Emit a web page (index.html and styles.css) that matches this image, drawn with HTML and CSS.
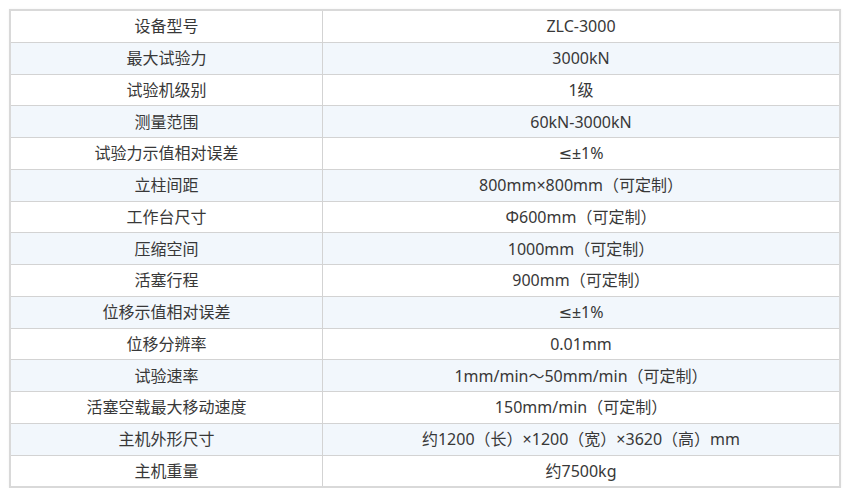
FILE: index.html
```html
<!DOCTYPE html>
<html lang="zh">
<head>
<meta charset="utf-8">
<title>参数表</title>
<link rel="stylesheet" href="styles.css">
</head>
<body>
<div class="wrap">
<table class="spec">
<tbody>
<tr><td class="k">设备型号</td><td class="v">ZLC-3000</td></tr>
<tr><td class="k">最大试验力</td><td class="v">3000kN</td></tr>
<tr><td class="k">试验机级别</td><td class="v">1级</td></tr>
<tr><td class="k">测量范围</td><td class="v">60kN-3000kN</td></tr>
<tr><td class="k">试验力示值相对误差</td><td class="v">≤±1%</td></tr>
<tr><td class="k">立柱间距</td><td class="v">800mm×800mm（可定制）</td></tr>
<tr><td class="k">工作台尺寸</td><td class="v">Φ600mm（可定制）</td></tr>
<tr><td class="k">压缩空间</td><td class="v">1000mm（可定制）</td></tr>
<tr><td class="k">活塞行程</td><td class="v">900mm（可定制）</td></tr>
<tr><td class="k">位移示值相对误差</td><td class="v">≤±1%</td></tr>
<tr><td class="k">位移分辨率</td><td class="v">0.01mm</td></tr>
<tr><td class="k">试验速率</td><td class="v">1mm/min～50mm/min（可定制）</td></tr>
<tr><td class="k">活塞空载最大移动速度</td><td class="v">150mm/min（可定制）</td></tr>
<tr><td class="k">主机外形尺寸</td><td class="v">约1200（长）×1200（宽）×3620（高）mm</td></tr>
<tr><td class="k">主机重量</td><td class="v">约7500kg</td></tr>
</tbody>
</table>
</div>
</body>
</html>
```
FILE: styles.css
```css
html, body {
  margin: 0;
  padding: 0;
  background: #ffffff;
}
.wrap {
  padding: 9px 4px 0 9px;
}
.spec {
  width: 832px;
  border-collapse: collapse;
  border: 2px solid #d9d9d9;
  font-family: "Noto Sans", "DejaVu Sans", "Noto Sans CJK SC", sans-serif;
  font-size: 16px;
  color: #383838;
  box-shadow: 0 0 2px rgba(0,0,0,0.06);
}
.spec td {
  border: 1px solid #d3d3d3;
  height: 30.75px;
  padding: 0;
  text-align: center;
  vertical-align: middle;
  line-height: 20px;
}
.spec td.k {
  width: 311px;
}
.spec tr:nth-child(even) td {
  background: #f2f7fc;
}
.spec tr:nth-child(odd) td {
  background: #ffffff;
}
```
